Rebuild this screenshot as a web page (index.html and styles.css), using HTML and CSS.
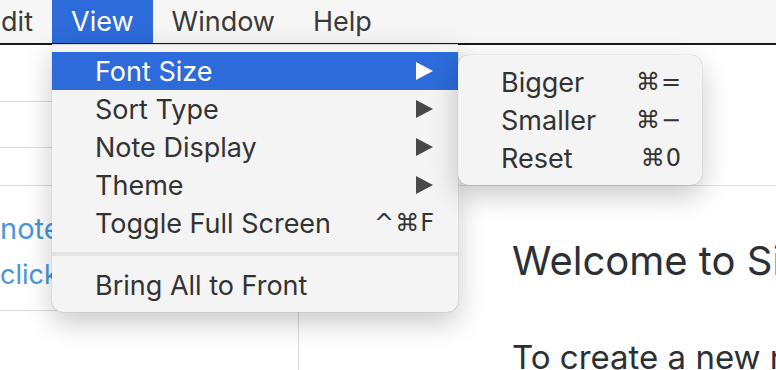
FILE: index.html
```html
<!DOCTYPE html>
<html lang="en">
<head>
    <meta charset="UTF-8">
    <meta name="viewport" content="width=device-width, initial-scale=1.0">
    <title>View Menu</title>
    <link rel="stylesheet" href="styles.css">
</head>
<body>
    <div class="menubar">
        <span class="mb-item edit">Edit</span>
        <span class="mb-item active">View</span>
        <span class="mb-item">Window</span>
        <span class="mb-item">Help</span>
    </div>

    <div class="window">
        <aside class="note-list">
            <div class="row row-search"></div>
            <div class="row row-tag"></div>
            <div class="row row-sort"></div>
            <div class="row row-note">
                <span class="note-title">notes</span>
                <span class="note-line">click</span>
            </div>
        </aside>
        <main class="editor">
            <div class="toolbar"></div>
            <div class="content">
                <h1>Welcome to Simplenote</h1>
                <p>To create a new note</p>
            </div>
        </main>
    </div>

    <!-- View dropdown -->
    <div class="menu view-menu">
        <div class="item selected"><span>Font Size</span><span class="arrow"></span></div>
        <div class="item"><span>Sort Type</span><span class="arrow"></span></div>
        <div class="item"><span>Note Display</span><span class="arrow"></span></div>
        <div class="item"><span>Theme</span><span class="arrow"></span></div>
        <div class="item"><span>Toggle Full Screen</span><span class="key">^⌘F</span></div>
        <div class="separator"></div>
        <div class="item"><span>Bring All to Front</span></div>
    </div>

    <!-- Font Size submenu -->
    <div class="menu sub-menu">
        <div class="item"><span>Bigger</span><span class="key">⌘=</span></div>
        <div class="item"><span>Smaller</span><span class="key">⌘−</span></div>
        <div class="item"><span>Reset</span><span class="key">⌘0</span></div>
    </div>
</body>
</html>
```

FILE: styles.css
```css
body {
    margin: 0;
    width: 776px;
    height: 370px;
    overflow: hidden;
    position: relative;
    font-family: "Inter", "DejaVu Sans", sans-serif;
    color: #333;
    background: #fff;
}
.menubar {
    display: flex;
    height: 43px;
    background: #f6f6f6;
    border-bottom: 2px solid #1a1a1a;
    font-size: 27px;
}
.mb-item {
    display: flex;
    align-items: center;
    padding: 0 19px;
    color: #3a3a3a;
    white-space: nowrap;
}
.mb-item.edit {
    width: 33px;
    padding: 0 19px 0 0;
    justify-content: flex-end;
}
.mb-item.active {
    background: #2c6bd9;
    color: #fff;
}
.window {
    display: grid;
    grid-template-columns: 299px 1fr;
    height: 325px;
}
.note-list {
    border-right: 1px solid #d9dcdf;
    background: #fff;
}
.row {
    border-bottom: 1px solid #dadde0;
}
.row-search {
    height: 56px;
}
.row-tag {
    height: 45px;
}
.row-sort {
    height: 37px;
}
.row-note {
    height: 125px;
    display: flex;
    flex-direction: column;
    padding-top: 24px;
    box-sizing: border-box;
    color: #4a95db;
}
.note-title {
    font-size: 29px;
    line-height: 38px;
}
.note-line {
    font-size: 27px;
    line-height: 54px;
}
.editor {
    background: #fff;
    overflow: hidden;
}
.toolbar {
    height: 140px;
    border-bottom: 1px solid #e0e3e6;
}
.content {
    padding: 51px 0 0 213px;
    color: #2c3036;
    white-space: nowrap;
}
.content h1 {
    margin: 0;
    font-weight: 400;
    font-size: 40px;
    line-height: 48px;
}
.content p {
    margin: 52px 0 0;
    font-size: 33px;
}

/* dropdowns */
.menu {
    position: absolute;
    background: #f4f4f4;
    color: #333;
    font-size: 27px;
    padding: 8px 0;
    box-shadow: 0 10px 28px rgba(0, 0, 0, 0.22), 0 0 1px rgba(0, 0, 0, 0.35);
}
.view-menu {
    left: 52px;
    top: 44px;
    width: 406px;
    border-radius: 0 0 11px 11px;
    border-top: 1px solid #d4d4d4;
    box-sizing: border-box;
    padding-top: 7px;
}
.sub-menu {
    left: 458px;
    top: 55px;
    width: 244px;
    border-radius: 11px;
}
.item {
    display: flex;
    justify-content: space-between;
    align-items: center;
    height: 38px;
    padding: 0 23px 0 43px;
    white-space: nowrap;
}
.item.selected {
    background: #2c6bd9;
    color: #fff;
}
.arrow {
    width: 0;
    height: 0;
    border-top: 9px solid transparent;
    border-bottom: 9px solid transparent;
    border-left: 17px solid #484848;
    margin-right: 2px;
}
.selected .arrow {
    border-left-color: #fff;
}
.key {
    font-family: "DejaVu Sans", sans-serif;
    font-size: 24px;
    letter-spacing: 1px;
}
.separator {
    height: 4px;
    background: #e3e3e3;
    margin: 10px 0 10px;
}
.sub-menu .item {
    padding: 0 20px 0 43px;
}
```
